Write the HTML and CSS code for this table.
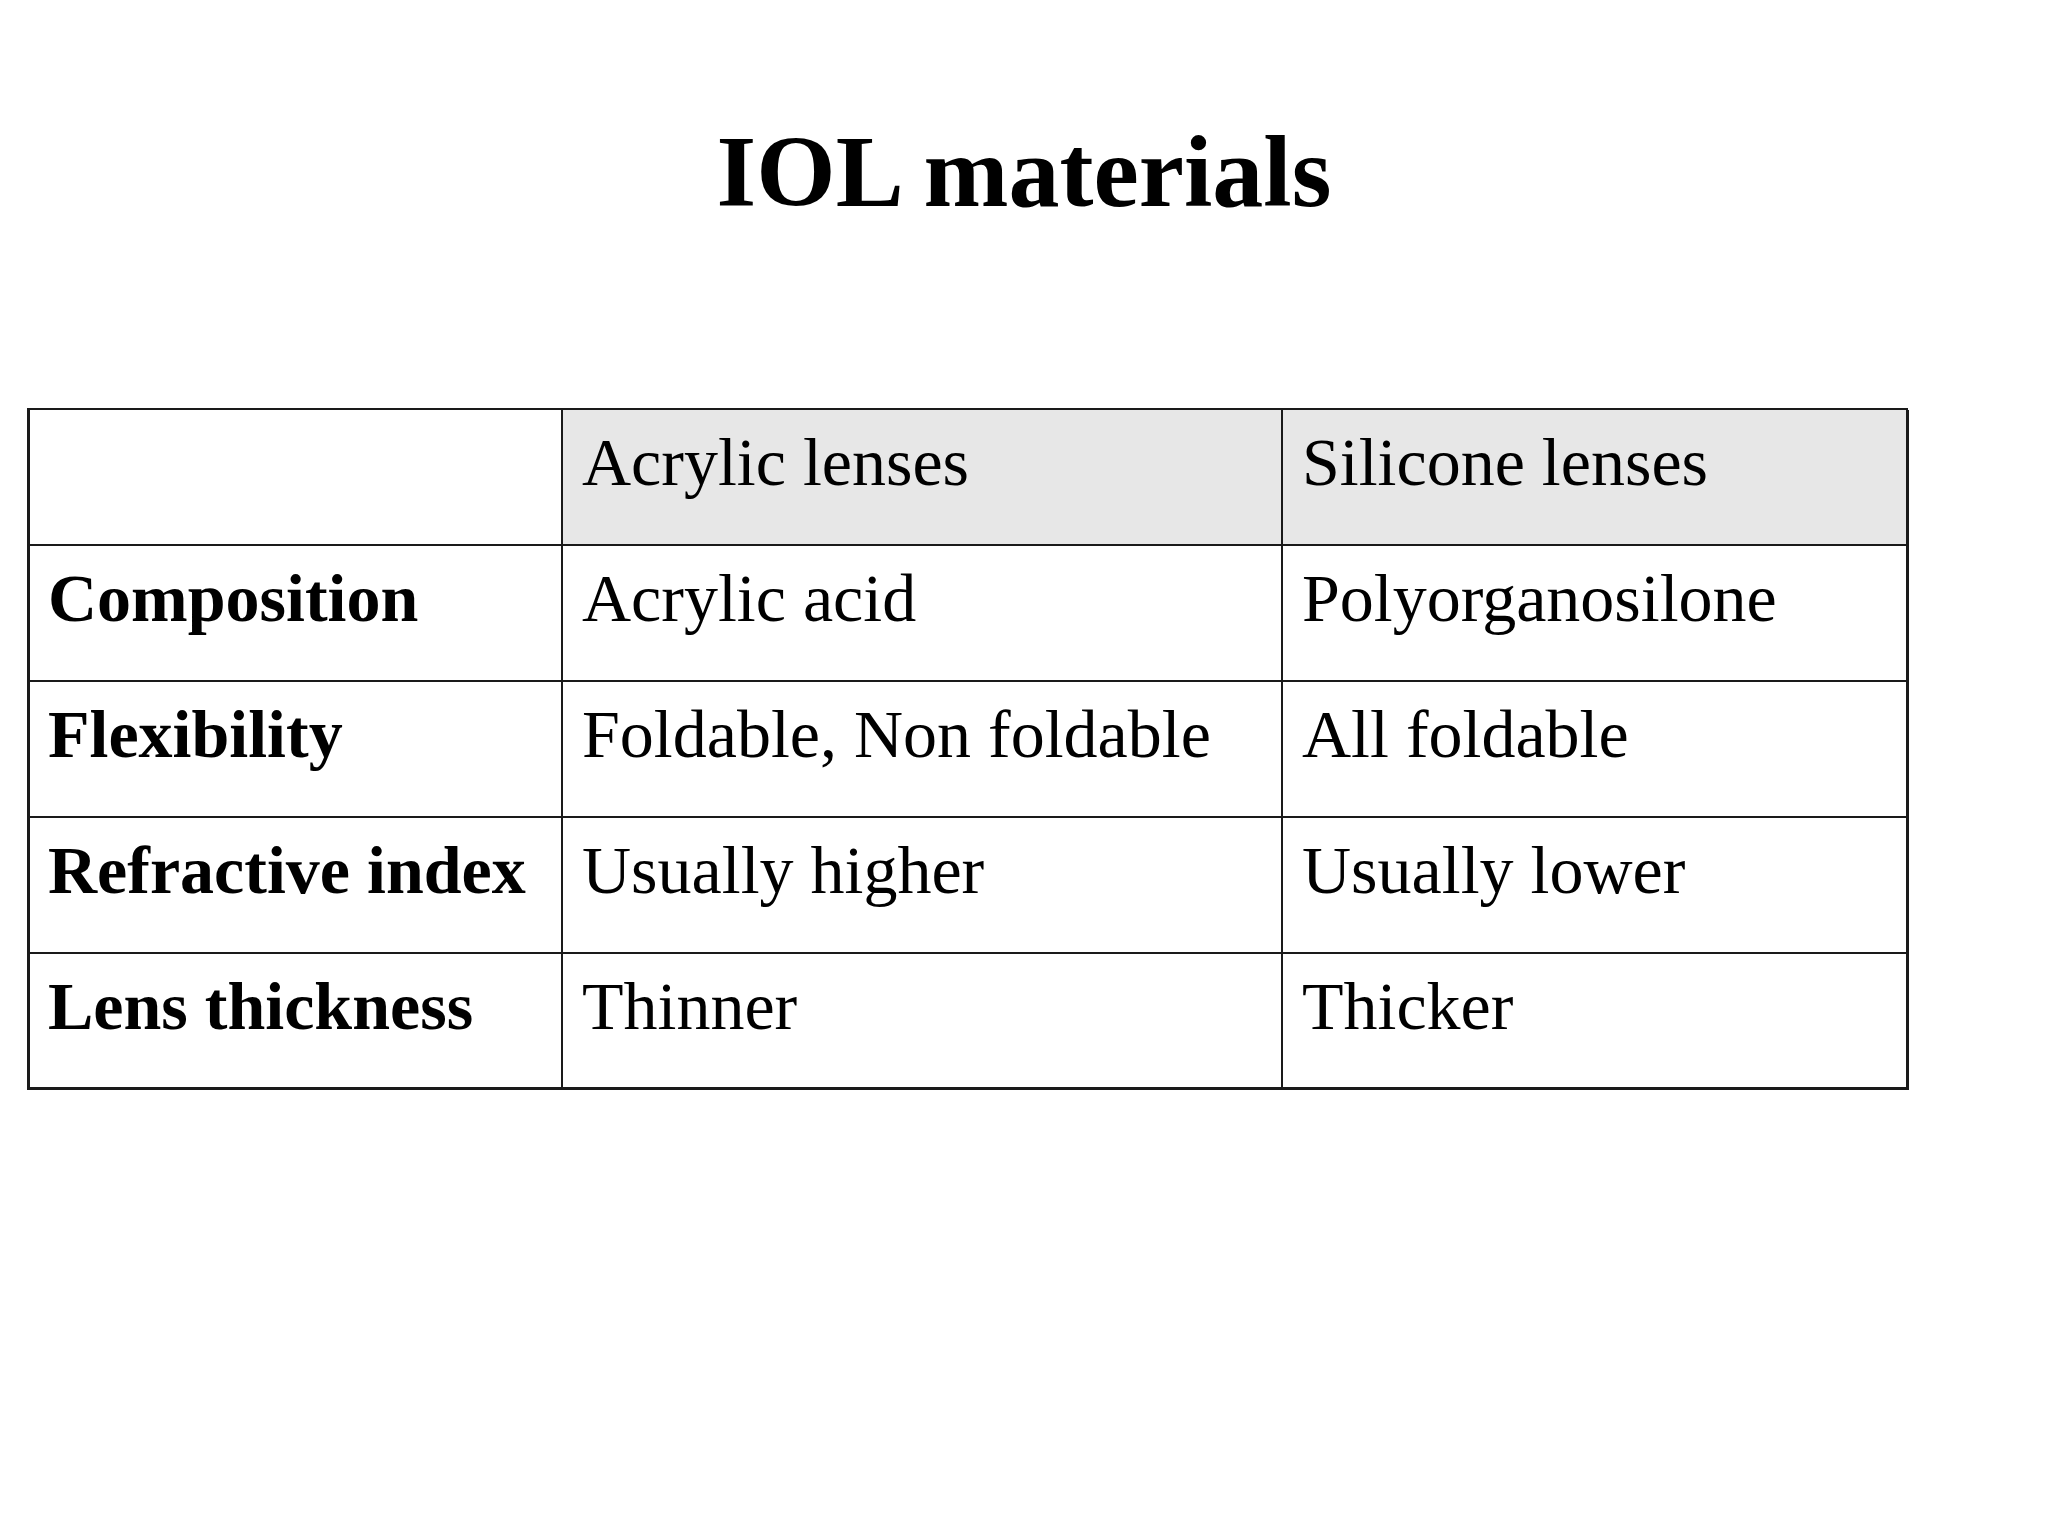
FILE: index.html
```html
<!DOCTYPE html>
<html lang="en">
<head>
<meta charset="utf-8">
<title>IOL materials</title>
<link rel="stylesheet" href="styles.css">
</head>
<body>
<main class="slide">
  <h1 class="title">IOL materials</h1>
  <div class="table">
    <div class="cell"></div>
    <div class="cell head">Acrylic lenses</div>
    <div class="cell head">Silicone lenses</div>

    <div class="cell label">Composition</div>
    <div class="cell">Acrylic acid</div>
    <div class="cell">Polyorganosilone</div>

    <div class="cell label">Flexibility</div>
    <div class="cell">Foldable, Non foldable</div>
    <div class="cell">All foldable</div>

    <div class="cell label">Refractive index</div>
    <div class="cell">Usually higher</div>
    <div class="cell">Usually lower</div>

    <div class="cell label">Lens thickness</div>
    <div class="cell">Thinner</div>
    <div class="cell">Thicker</div>
  </div>
</main>
</body>
</html>
```

FILE: styles.css
```css
html, body {
  margin: 0;
  padding: 0;
  background: #ffffff;
}

body {
  width: 2048px;
  height: 1536px;
  font-family: "Liberation Serif", "Times New Roman", serif;
  color: #000000;
}

.slide {
  display: flex;
  flex-direction: column;
  padding-top: 121px;
}

.title {
  margin: 0;
  font-size: 102px;
  line-height: 102px;
  font-weight: bold;
  text-align: center;
}

.table {
  margin-top: 185px;
  margin-left: 27px;
  width: 1881px;
  box-sizing: border-box;
  display: grid;
  grid-template-columns: 533px 720px 626px;
  grid-auto-rows: 136px;
  border-top: 2px solid #1a1a1a;
  border-left: 3px solid #1a1a1a;
}

.cell {
  box-sizing: border-box;
  border-right: 2px solid #1a1a1a;
  border-bottom: 2px solid #1a1a1a;
  padding: 15px 0 0 19px;
  font-size: 68px;
  line-height: 75px;
  white-space: nowrap;
}

.cell:nth-child(3n) {
  border-right-width: 3px;
}

.cell:nth-child(n+13) {
  border-bottom-width: 3px;
}

.head {
  background: #e7e7e7;
}

.label {
  font-weight: bold;
  padding-left: 18px;
}
```
